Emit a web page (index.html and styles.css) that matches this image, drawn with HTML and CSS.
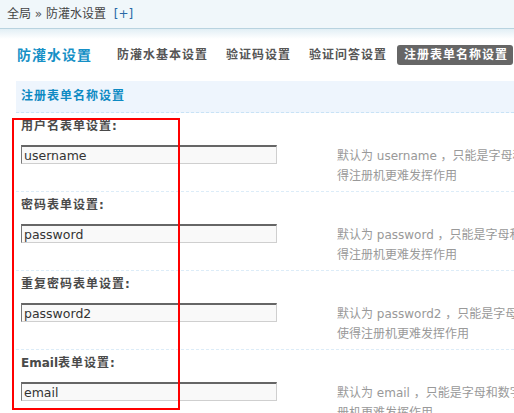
FILE: index.html
```html
<!DOCTYPE html>
<html lang="zh-CN">
<head>
<meta charset="utf-8">
<title>注册表单名称设置</title>
<link rel="stylesheet" href="styles.css">
</head>
<body>
<div class="page">
  <div class="crumb">全局 <span class="sep">»</span> 防灌水设置 <a class="add" href="#">[+]</a></div>
  <div class="crumb-fade"></div>

  <div class="tabs">
    <h3 class="tabs-title">防灌水设置</h3>
    <ul class="tab-list">
      <li class="tab">防灌水基本设置</li>
      <li class="tab">验证码设置</li>
      <li class="tab">验证问答设置</li>
      <li class="tab tab-active">注册表单名称设置</li>
    </ul>
  </div>

  <div class="section-title">注册表单名称设置</div>

  <div class="rows">
    <div class="row">
      <div class="label">用户名表单设置:</div>
      <div class="field">
        <div class="input">username</div>
        <div class="desc">默认为 username ，只能是字母和数字的组合，修改后可以使得注册机更难发挥作用</div>
      </div>
    </div>
    <div class="row">
      <div class="label">密码表单设置:</div>
      <div class="field">
        <div class="input">password</div>
        <div class="desc">默认为 password ，只能是字母和数字的组合，修改后可以使得注册机更难发挥作用</div>
      </div>
    </div>
    <div class="row">
      <div class="label">重复密码表单设置:</div>
      <div class="field">
        <div class="input">password2</div>
        <div class="desc">默认为 password2 ，只能是字母和数字的组合，修改后可以使得注册机更难发挥作用</div>
      </div>
    </div>
    <div class="row">
      <div class="label"><span class="latin">Email</span>表单设置:</div>
      <div class="field">
        <div class="input">email</div>
        <div class="desc">默认为 email ，只能是字母和数字的组合，修改后可以使得注册机更难发挥作用</div>
      </div>
    </div>
  </div>

  <div class="annot"></div>
</div>
</body>
</html>
```

FILE: styles.css
```css
html, body {
  margin: 0;
  padding: 0;
  background: #fff;
}

.page {
  position: relative;
  width: 514px;
  height: 413px;
  overflow: hidden;
  font-family: "DejaVu Sans", "Noto Sans CJK SC", sans-serif;
  font-size: 12px;
  color: #333;
}

.crumb {
  height: 28px;
  line-height: 28px;
  padding-left: 7px;
  background: #f0f7fa;
  border-bottom: 1px solid #b8d3df;
  color: #444;
  white-space: nowrap;
}

.crumb .sep {
  color: #555;
}

.crumb .add {
  margin-left: 4px;
  color: #2a68a6;
  text-decoration: none;
}

.crumb-fade {
  height: 10px;
  background: linear-gradient(#e2eff5, #ffffff);
}

.tabs {
  display: flex;
  align-items: center;
  height: 20px;
  margin-top: 6px;
  padding-left: 17px;
  white-space: nowrap;
}

.tabs-title {
  margin: 0 17px 0 0;
  font-size: 14px;
  font-weight: bold;
  letter-spacing: 1px;
  color: #1690c6;
  line-height: 20px;
}

.tab-list {
  display: flex;
  margin: 0;
  padding: 0;
  list-style: none;
  gap: 2px;
}

.tab {
  padding: 0 8px;
  height: 20px;
  line-height: 20px;
  font-weight: bold;
  letter-spacing: 1px;
  color: #555;
  border-radius: 3px;
}

.tab-active {
  padding: 0 5px 0 7px;
  background: #666;
  color: #fff;
}

.section-title {
  margin: 16px 0 0 16px;
  padding-left: 5px;
  height: 31px;
  line-height: 30px;
  background: #eef5fd;
  border-bottom: 1px dashed #c9e3f6;
  font-weight: bold;
  letter-spacing: 1px;
  color: #0e8ac3;
}

.rows {
  margin-left: 16px;
}

.row {
  padding: 0 0 5px 5px;
  border-bottom: 1px dashed #dcecf8;
}

.label {
  height: 26px;
  line-height: 26px;
  font-weight: bold;
  letter-spacing: 1px;
  color: #4a4a4a;
  white-space: nowrap;
}

.label .latin {
  letter-spacing: 0;
}

.field {
  display: flex;
  align-items: flex-start;
  margin-top: 6px;
}

.input {
  flex: none;
  box-sizing: border-box;
  width: 256px;
  height: 19px;
  padding-left: 2px;
  line-height: 17px;
  font-size: 12.5px;
  color: #333;
  background: #f9f9f9;
  border-style: solid;
  border-width: 2px 1px 1px 1px;
  border-color: #666 #cfcfcf #cfcfcf #777;
  white-space: nowrap;
}

.desc {
  flex: none;
  width: 333px;
  margin: 1px 0 0 60px;
  line-height: 20px;
  color: #999;
}

.annot {
  position: absolute;
  left: 12px;
  top: 118px;
  width: 168px;
  height: 292px;
  box-sizing: border-box;
  border: 2px solid #f00;
}
```
